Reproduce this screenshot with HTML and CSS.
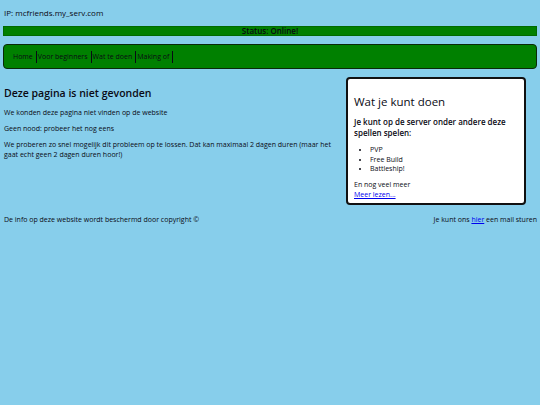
FILE: index.html
```html
<!DOCTYPE html>
<html lang="nl">
<head>
<meta charset="utf-8">
<title>mcfriends</title>
<link rel="stylesheet" href="styles.css">
</head>
<body>
<header class="top">
  <p class="ip">IP: mcfriends.my_serv.com</p>
  <div class="status">Status: Online!</div>
  <nav class="nav">
    <a class="nav-item">Home</a><a class="nav-item">Voor beginners</a><a class="nav-item">Wat te doen</a><a class="nav-item">Making of</a>
  </nav>
</header>
<div class="main">
  <section class="content">
    <h2 class="title">Deze pagina is niet gevonden</h2>
    <p>We konden deze pagina niet vinden op de website</p>
    <p>Geen nood: probeer het nog eens</p>
    <p>We proberen zo snel mogelijk dit probleem op te lossen. Dat kan maximaal 2 dagen duren (maar het gaat echt geen 2 dagen duren hoor!)</p>
  </section>
  <aside class="side">
    <h2 class="side-title">Wat je kunt doen</h2>
    <h3 class="side-sub">Je kunt op de server onder andere deze spellen spelen:</h3>
    <ul class="list">
      <li>PVP</li>
      <li>Free Build</li>
      <li>Battleship!</li>
    </ul>
    <p class="more">En nog veel meer<br><a href="#">Meer lezen...</a></p>
  </aside>
</div>
<footer class="foot">
  <span>De info op deze website wordt beschermd door copyright ©</span>
  <span>Je kunt ons <a href="#">hier</a> een mail sturen</span>
</footer>
</body>
</html>
```
FILE: styles.css
```css
html, body {
  margin: 0;
  background: #87ceeb;
}
body {
  padding: 0 3px;
  font-family: "Open Sans", "DejaVu Sans", sans-serif;
  font-size: 7px;
  color: #0a0a14;
}
.ip {
  margin: 0;
  padding: 7px 1px 0;
  font-size: 8px;
  line-height: 11px;
}
.status {
  margin-top: 8px;
  background: #008000;
  border: 1px solid #006a00;
  text-align: center;
  font-size: 8px;
  line-height: 8px;
  font-weight: 600;
  height: 8px;
}
.nav {
  margin-top: 8px;
  background: #008000;
  border: 1.5px solid #0a2a0a;
  border-radius: 4px;
  height: 23px;
  display: flex;
  align-items: center;
  padding-left: 9px;
  font-size: 7px;
}
.nav-item {
  color: #0a0a14;
  text-decoration: none;
  line-height: 12px;
  padding-right: 3px;
  margin-right: 1px;
  border-right: 1px solid #0a0a14;
}
.main {
  display: flex;
  align-items: flex-start;
  margin-top: 8px;
}
.content {
  flex: 1;
  padding-left: 1px;
  padding-right: 12px;
}
.title {
  margin: 9px 0 0;
  font-size: 10.5px;
  line-height: 14px;
  font-weight: 600;
}
.content p {
  margin: 8px 0 0;
  line-height: 9.5px;
}
.content p + p { margin-top: 6.5px; }
.side {
  box-sizing: border-box;
  width: 180px;
  margin-right: 11px;
  background: #fff;
  border: 2px solid #111;
  border-radius: 4px;
  padding: 8px 6px 4px 6px;
}
.side-title {
  margin: 7px 0 0;
  font-size: 11.5px;
  line-height: 16px;
  font-weight: 500;
}
.side-sub {
  margin: 6px 0 0;
  font-size: 8px;
  line-height: 11px;
  font-weight: 600;
}
.list {
  margin: 7px 0 0;
  padding-left: 16px;
  line-height: 9.7px;
}
.more {
  margin: 6px 0 0;
  line-height: 9.5px;
}
a { color: #0000ee; }
.foot {
  display: flex;
  justify-content: space-between;
  padding: 10px 0 0 1px;
  line-height: 9.5px;
}
```
